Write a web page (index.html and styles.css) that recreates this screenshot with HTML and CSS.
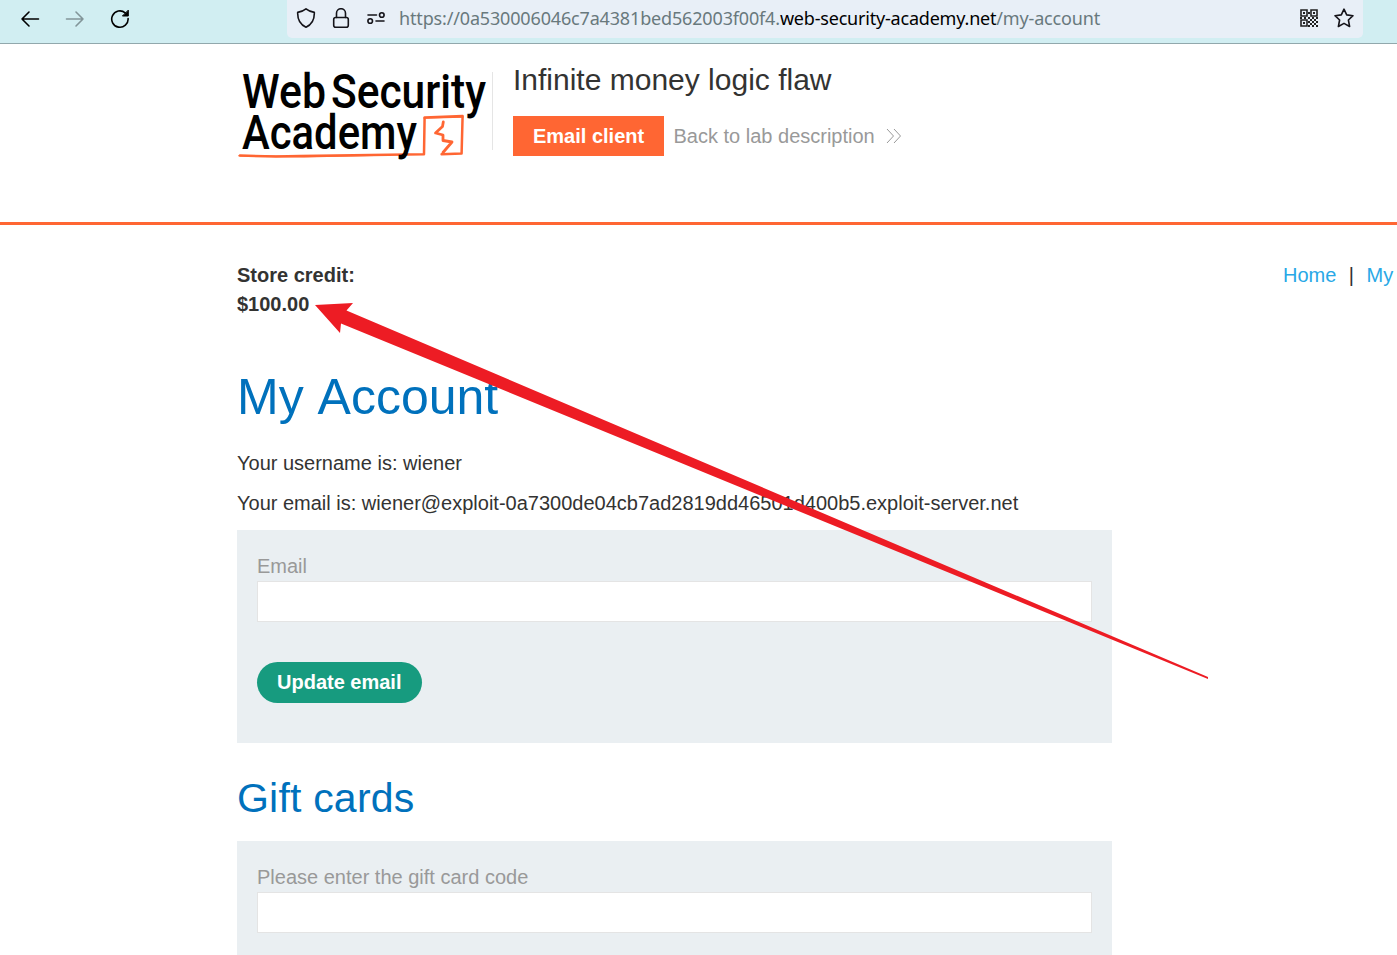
FILE: index.html
```html
<!DOCTYPE html>
<html lang="en">
<head>
<meta charset="utf-8">
<title>Infinite money logic flaw</title>
<link rel="stylesheet" href="styles.css">
</head>
<body>
<div class="toolbar">
  <div class="nav">
    <svg width="20" height="20" viewBox="0 0 20 20" class="icon"><path d="M18.500 10H2M9 3L2 10l7 7"/></svg>
    <svg width="20" height="20" viewBox="0 0 20 20" class="icon muted"><path d="M1.500 10H18M11 3l7 7-7 7"/></svg>
    <svg width="20" height="20" viewBox="0 0 20 20" class="icon"><path d="M18.100 9.500A8.200 8.200 0 1 1 15.200 3.800"/><path class="solid" d="M18.300 1.500v5.500h-5.500z"/></svg>
  </div>
  <div class="address">
    <svg width="20" height="20" viewBox="0 0 20 20" class="icon shield"><path d="M10 .8c2.500 2 5.300 3 8.300 3.600C18.600 11 16 16.500 10 19.200 4 16.500 1.400 11 1.700 4.400 4.700 3.800 7.500 2.800 10 .8z"/></svg>
    <svg width="18" height="20" viewBox="0 0 18 20" class="icon lock"><rect x="1.700" y="9.500" width="14.600" height="9.700" rx="2"/><path d="M4.500 9.500V5.200a4.500 4.500 0 0 1 9 0v4.300"/></svg>
    <svg width="20" height="14" viewBox="0 0 20 14" class="icon"><path d="M2 4h8.500M10 10h8"/><circle cx="15.800" cy="4" r="2.300"/><circle cx="4.200" cy="10" r="2.300"/></svg>
    <div class="url"><span class="sub">https://0a530006046c7a4381bed562003f00f4.</span><span class="host">web-security-academy.net</span><span class="path">/my-account</span></div>
    <svg width="18" height="18" viewBox="0 0 18 18" class="qr"><path class="frame" d="M1 1h6v6H1zM11 1h6v6h-6zM1 11h6v6H1z"/><path d="M3 3h2v2H3zM13 3h2v2h-2zM3 13h2v2H3zM8 3h2v2H8zM0 8h2v2H0zM4 8h2v2H4zM8 8h2v2H8zM12 8h2v2h-2zM16 8h2v2h-2zM10 10h2v2h-2zM14 10h2v2h-2zM8 12h2v2H8zM12 12h2v2h-2zM16 12h2v2h-2zM10 14h2v2h-2zM14 14h2v2h-2zM8 16h2v2H8zM12 16h2v2h-2zM16 16h2v2h-2z"/></svg>
    <svg width="20" height="20" viewBox="0 0 20 20" class="icon star"><path d="M10 1.200l2.700 5.700 6.300.8-4.600 4.300 1.200 6.500-5.600-3.100-5.600 3.100 1.200-6.500L1 7.700l6.300-.8z"/></svg>
  </div>
</div>
<header class="header">
  <svg class="logo" width="256" height="100" viewBox="237 64 256 100">
    <path class="rule" d="M492.500 72v78"/>
    <text x="242" y="108" textLength="84" lengthAdjust="spacingAndGlyphs">Web</text>
    <text x="331" y="108" textLength="155" lengthAdjust="spacingAndGlyphs">Security</text>
    <path class="mark" d="M240 155.500Q270 157 300 156l124-1.800.6-36.700 38-1.500-1 37.500-20 .8"/>
    <path class="mark fine" d="M239 155.800l65 1 70-1.500M424 118l39-1"/>
    <text x="242" y="149" textLength="175" lengthAdjust="spacingAndGlyphs">Academy</text>
    <path class="mark bolt" d="M443.300 122l-.8 4.500-7 6.500 7.500 2v5.500l9 1.500-9 10.500"/>
  </svg>
  <div class="lab">
    <h2>Infinite money logic flaw</h2>
    <div class="actions"><a class="client">Email client</a><a class="back">Back to lab description</a>
      <svg width="16" height="16" viewBox="0 0 16 16" class="chevrons"><path d="M1 1l6.500 7L1 15M8 1l6.500 7L8 15"/></svg>
    </div>
  </div>
</header>
<main class="main">
  <div class="top">
    <p class="credit">Store credit:<br>$100.00</p>
    <nav class="links"><a>Home</a><span>|</span><a>My</a></nav>
  </div>
  <h1>My Account</h1>
  <p class="info">Your username is: wiener</p>
  <p class="info">Your email is: wiener@exploit-0a7300de04cb7ad2819dd46501d400b5.exploit-server.net</p>
  <form class="panel email">
    <label for="email">Email</label>
    <input id="email" type="text">
    <button type="button">Update email</button>
  </form>
  <h3>Gift cards</h3>
  <form class="panel gift">
    <label for="gift">Please enter the gift card code</label>
    <input id="gift" type="text">
  </form>
</main>
<svg class="arrow" width="1397" height="955" viewBox="0 0 1397 955"><path d="M315 305l38-2-6.500 7.500L1208 677v2L341 323.500l-1 9.500z"/></svg>
</body>
</html>
```
FILE: styles.css
```css
* { box-sizing: border-box; }
body { margin: 0; width: 1397px; height: 955px; overflow: hidden; position: relative; background: #fff; color: #333332; font: 20px/29px "Liberation Sans", Arial, sans-serif; }
h1, h2, h3, p { margin: 0; font-weight: 400; }
.toolbar { height: 44px; display: flex; background: #d1eef2; border-bottom: 1px solid #91a8ac; }
.nav { width: 287px; height: 38px; padding-left: 20px; display: flex; align-items: center; gap: 25px; }
.address { width: 1076px; height: 38px; padding: 0 9px; display: flex; align-items: center; background: #e8eff7; border-radius: 0 0 5px 5px; }
.icon { flex: none; fill: none; stroke: #15141a; stroke-width: 1.6; stroke-linecap: round; stroke-linejoin: round; }
.address .icon, .qr { position: relative; top: -1px; }
.nav .icon { stroke: #000; }
.nav .muted { stroke: #829599; }
.icon .solid { fill: #000; stroke-width: 1; }
.shield { margin-right: 16px; }
.lock { margin-right: 16px; }
.url { flex: 1; padding: 0 0 1px 13px; font: 18px/35px "Noto Sans", "Open Sans", sans-serif; letter-spacing: -.16px; white-space: nowrap; color: #68797d; }
.host { color: #000; letter-spacing: -.2px; }
.qr { margin-right: 16px; fill: #222; }
.qr .frame { fill: none; stroke: #222; stroke-width: 1.600; }
.header { height: 181px; padding: 19px 0 0 237px; display: flex; align-items: flex-start; border-bottom: 3px solid #ff6633; }
.logo { margin-top: 1px; flex: none; }
.logo text { font: 500 48px Roboto, sans-serif; fill: #000; }
.logo .mark { fill: none; stroke: #ff6633; stroke-width: 2.500; stroke-linejoin: round; stroke-linecap: round; }
.logo .fine { stroke-width: 1.500; }
.logo .bolt { stroke-width: 2.800; }
.logo .rule { stroke: #e5e5e5; }
.lab { padding-left: 20px; }
h2 { font-size: 30px; line-height: 34px; }
.actions { margin-top: 19px; display: flex; align-items: center; color: #999; }
.client { height: 40px; width: 151px; padding-left: 20px; margin-right: 9.500px; line-height: 40px; background: #ff6633; color: #fff; font-weight: 700; }
.chevrons { margin-left: 11px; fill: none; stroke: #999; stroke-width: 1; }
.main { padding: 36px 0 0 237px; }
.top { height: 58px; display: flex; justify-content: space-between; }
.credit { font-weight: 700; }
.links { width: 114px; display: flex; gap: 12.500px; white-space: nowrap; }
.links a { color: #29a8e6; }
h1 { margin-top: 49px; font-size: 50px; font-kerning: none; line-height: 58px; color: #0071bc; }
.info { height: 40px; line-height: 40px; }
h1 + .info { margin-top: 17px; }
.panel { width: 875px; padding: 20px; display: flex; flex-direction: column; align-items: flex-start; background: #eaeff2; }
.info + .panel { margin-top: 7px; }
.gift { height: 114px; }
.panel label { flex: none; height: 31px; line-height: 33px; color: #999; }
.panel input { flex: none; width: 835px; height: 41px; border: 1px solid #e4e4e4; background: #fff; padding: 0 10px; font: inherit; }
.panel button { width: 165px; height: 41px; margin: 40px 0 20px; padding: 0 0 0 20px; text-align: left; border: 0; border-radius: 21px; background: #179b7f; color: #fff; font: 700 20px/41px "Liberation Sans", Arial, sans-serif; }
h3 { height: 98px; padding-top: 32px; font-size: 41px; letter-spacing: .2px; line-height: 47px; color: #0071bc; }
.arrow { position: absolute; left: 0; top: 0; pointer-events: none; fill: #ed1c24; }
```
